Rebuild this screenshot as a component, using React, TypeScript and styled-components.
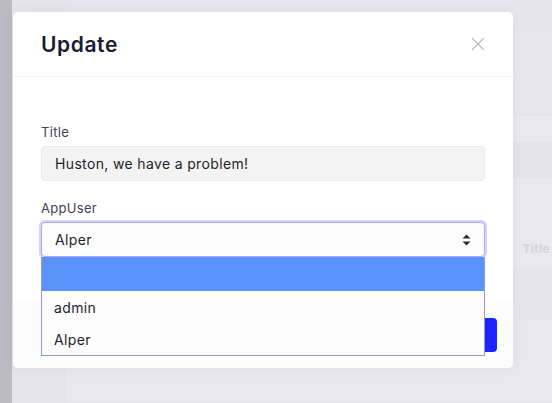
import React from 'react';
import styled, { createGlobalStyle } from 'styled-components';

const GlobalStyle = createGlobalStyle`
  html, body {
    margin: 0;
    padding: 0;
    background: #e8e8ee;
    font-family: "Inter", "Open Sans", sans-serif;
  }
  * { box-sizing: border-box; }
`;

const Page = styled.div`
  position: relative;
  width: 552px;
  height: 403px;
  overflow: hidden;
  display: grid;
  grid-template-columns: 12px 55px 1fr;
`;

const Sidebar = styled.div`
  background: #bbbbc3;
`;

const SideColumn = styled.div`
  background: #e5e5ea;
`;

const Main = styled.div`
  display: flex;
  flex-direction: column;
  background: #e8e8ee;
`;

const Band = styled.div<{ $h: number; $bg: string }>`
  height: ${p => p.$h}px;
  background: ${p => p.$bg};
  border-bottom: 1px solid #e3e3e9;
  display: flex;
  align-items: flex-end;
  justify-content: flex-end;
  padding: 0 2px 13px 0;
`;

const HeadCell = styled.span`
  font-size: 12px;
  font-weight: 700;
  color: #d4d4db;
  letter-spacing: 0.3px;
`;

const Overlay = styled.div`
  position: absolute;
  inset: 0;
  padding: 12px 0 0 13px;
`;

const Modal = styled.div`
  width: 500px;
  height: 356px;
  background: #ffffff;
  border-radius: 5px;
  box-shadow: 0 0 14px rgba(60, 60, 90, 0.06);
  display: flex;
  flex-direction: column;
`;

const Header = styled.div`
  height: 65px;
  padding: 0 28px;
  display: flex;
  align-items: center;
  justify-content: space-between;
  border-bottom: 1px solid #f3f3f5;
`;

const Heading = styled.h2`
  margin: 0;
  font-size: 21px;
  font-weight: 600;
  color: #181c32;
  letter-spacing: 0.6px;
`;

const CloseButton = styled.button`
  border: 0;
  background: none;
  padding: 0;
  width: 14px;
  height: 14px;
  display: flex;
`;

const Body = styled.div`
  flex: 1;
  padding: 45px 28px 0;
`;

const Field = styled.div`
  position: relative;
  margin-bottom: 17px;
`;

const Label = styled.label`
  display: block;
  font-size: 13px;
  line-height: 20px;
  color: #3f4254;
  margin-bottom: 4px;
  letter-spacing: 0.3px;
`;

const TextInput = styled.div`
  height: 35px;
  border: 1px solid #e9e9ec;
  border-radius: 4px;
  background: #f3f3f3;
  padding: 0 13px;
  display: flex;
  align-items: center;
  font-size: 14px;
  color: #1e1e2d;
  letter-spacing: 0.35px;
`;

const SelectBox = styled.div`
  height: 35px;
  border: 1px solid #a9a9f7;
  box-shadow: 0 0 0 2px #d3d3fb;
  border-radius: 4px;
  background: #fcfcfc;
  padding: 0 13px;
  display: flex;
  align-items: center;
  justify-content: space-between;
  font-size: 14px;
  color: #1e1e2d;
  letter-spacing: 0.35px;
`;

const Options = styled.ul`
  position: absolute;
  left: 0;
  right: 0;
  top: 59px;
  margin: 0;
  padding: 0;
  list-style: none;
  background: #fcfcfc;
  border: 1px solid #8e9ccf;
  border-top: 0;
  z-index: 2;
`;

const Option = styled.li<{ $active?: boolean }>`
  height: 32px;
  padding: 0 12px;
  display: flex;
  align-items: center;
  font-size: 14px;
  color: #1e1e2d;
  letter-spacing: 0.35px;
  background: ${p => (p.$active ? '#5b93fb' : 'transparent')};

  &:first-child {
    height: 34px;
  }
`;

const Footer = styled.div`
  height: 66px;
  background: #fcfcfd;
  border-radius: 0 0 5px 5px;
  display: flex;
  align-items: center;
  justify-content: flex-end;
  padding: 0 16px;
`;

const SaveButton = styled.button`
  width: 80px;
  height: 34px;
  border: 0;
  border-radius: 4px;
  background: #1a25ff;
  color: #fff;
  font-size: 13px;
`;

const App: React.FC = () => {
  return (
    <>
      <GlobalStyle />
      <Page>
        <Sidebar />
        <SideColumn />
        <Main>
          <Band $h={32} $bg="#e6e6ec" />
          <Band $h={83} $bg="#e7e7ed" />
          <Band $h={28} $bg="#e9e9ef" />
          <Band $h={35} $bg="#e4e4ea" />
          <Band $h={92} $bg="#e9e9ef">
            <HeadCell>Title</HeadCell>
          </Band>
          <Band $h={50} $bg="#e6e6ec" />
          <Band $h={83} $bg="#e8e8ee" />
        </Main>
        <Overlay>
          <Modal>
            <Header>
              <Heading>Update</Heading>
              <CloseButton aria-label="Close">
                <svg width="14" height="14" viewBox="0 0 14 14">
                  <path d="M1 1L13 13M13 1L1 13" stroke="#b9b9bf" strokeWidth="1.1" />
                </svg>
              </CloseButton>
            </Header>
            <Body>
              <Field>
                <Label>Title</Label>
                <TextInput>Huston, we have a problem!</TextInput>
              </Field>
              <Field>
                <Label>AppUser</Label>
                <SelectBox>
                  <span>Alper</span>
                  <svg width="9" height="12" viewBox="0 0 9 12">
                    <path d="M4.5 0.5L8.5 4.5H0.5Z M4.5 11.5L8.5 7.5H0.5Z" fill="#2b2b33" />
                  </svg>
                </SelectBox>
                <Options>
                  <Option $active>&nbsp;</Option>
                  <Option>admin</Option>
                  <Option>Alper</Option>
                </Options>
              </Field>
            </Body>
            <Footer>
              <SaveButton>Save</SaveButton>
            </Footer>
          </Modal>
        </Overlay>
      </Page>
    </>
  );
};

export default App;
